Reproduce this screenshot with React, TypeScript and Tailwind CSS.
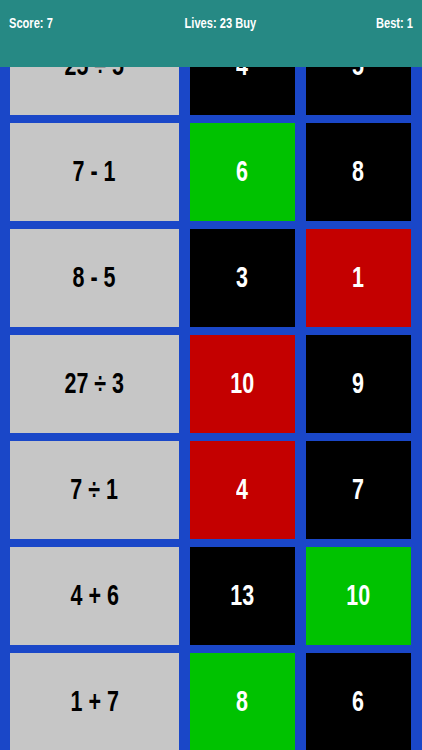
import React from 'react';

type Tone = 'black' | 'green' | 'red';

interface Row {
  question: string;
  answers: { value: string; tone: Tone }[];
}

const rows: Row[] = [
  { question: '25 ÷ 5', answers: [{ value: '4', tone: 'black' }, { value: '5', tone: 'black' }] },
  { question: '7 - 1', answers: [{ value: '6', tone: 'green' }, { value: '8', tone: 'black' }] },
  { question: '8 - 5', answers: [{ value: '3', tone: 'black' }, { value: '1', tone: 'red' }] },
  { question: '27 ÷ 3', answers: [{ value: '10', tone: 'red' }, { value: '9', tone: 'black' }] },
  { question: '7 ÷ 1', answers: [{ value: '4', tone: 'red' }, { value: '7', tone: 'black' }] },
  { question: '4 + 6', answers: [{ value: '13', tone: 'black' }, { value: '10', tone: 'green' }] },
  { question: '1 + 7', answers: [{ value: '8', tone: 'green' }, { value: '6', tone: 'black' }] },
];

const toneClass: Record<Tone, string> = {
  black: 'bg-black',
  green: 'bg-[#00c200]',
  red: 'bg-[#c40000]',
};

const font = { fontFamily: '"Liberation Sans", Arial, sans-serif' };

export default function App() {
  return (
    <div className="relative w-[422px] h-[750px] overflow-hidden bg-[#1a47c8]" style={font}>
      {/* Barra superior */}
      <div className="absolute top-0 left-0 right-0 z-10 h-[67px] bg-[#268984] flex items-start justify-between px-[9px] pt-[15px] text-white font-bold text-[15px] leading-none">
        <span className="inline-block scale-x-[0.74] origin-left whitespace-nowrap">Score: 7</span>
        <span className="inline-block scale-x-[0.74] origin-center whitespace-nowrap ml-[10px]">Lives: 23 Buy</span>
        <span className="inline-block scale-x-[0.74] origin-right whitespace-nowrap">Best: 1</span>
      </div>

      {/* Grade de perguntas */}
      <div className="flex flex-col gap-[8px] pt-[17px] pl-[10px] pr-[11px]">
        {rows.map((row, i) => (
          <div key={i} className="flex gap-[11px] h-[98px]">
            <div className="w-[169px] bg-[#c6c6c6] flex items-center justify-center text-black font-bold text-[29px]">
              <span className="inline-block scale-x-[0.74] whitespace-nowrap">{row.question}</span>
            </div>
            {row.answers.map((a, j) => (
              <div
                key={j}
                className={`w-[105px] ${toneClass[a.tone]} flex items-center justify-center text-white font-bold text-[29px]`}
              >
                <span className="inline-block scale-x-[0.74]">{a.value}</span>
              </div>
            ))}
          </div>
        ))}
      </div>
    </div>
  );
}
